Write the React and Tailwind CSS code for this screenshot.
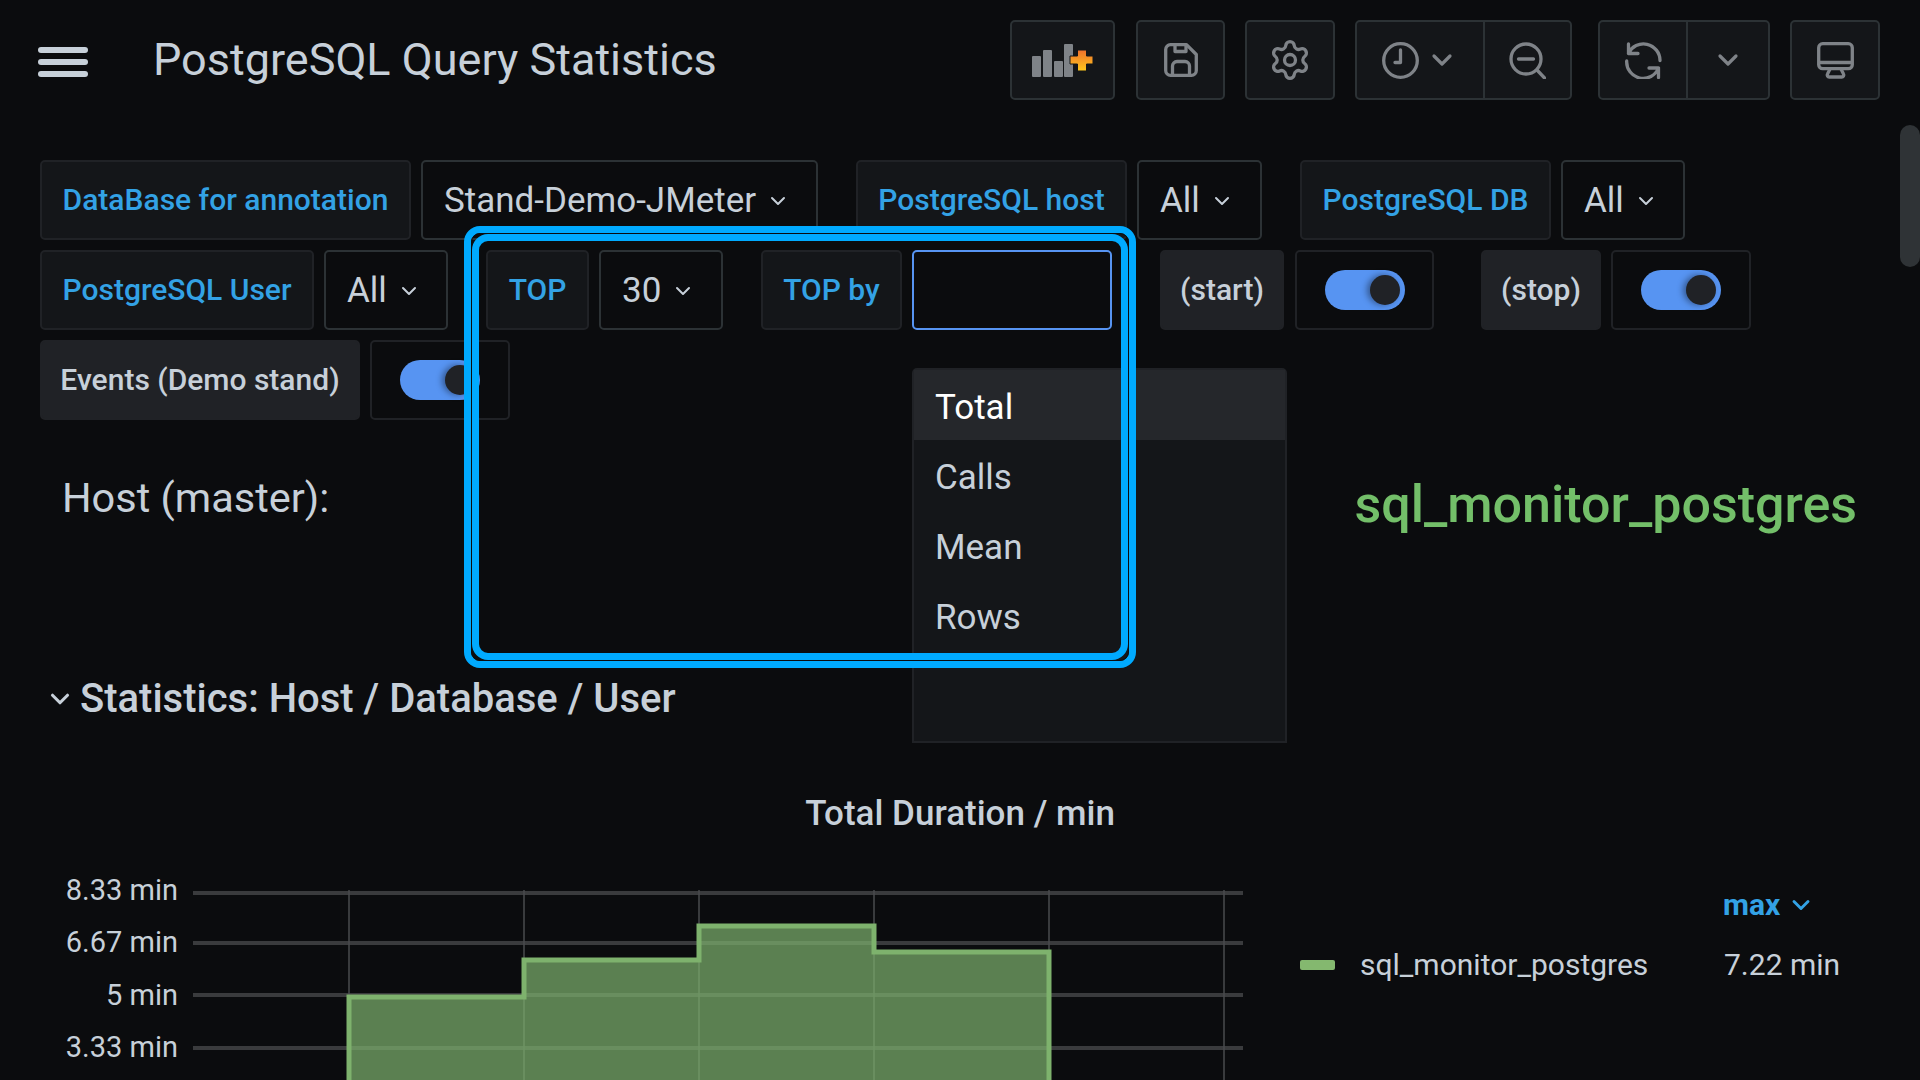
import React from 'react';
import { ChevronDown, Settings } from 'lucide-react';

const font = { fontFamily: 'Roboto, sans-serif' };

const Label = ({ w, dim, children }) => (
    <div className={`flex items-center justify-center h-[80px] pb-[1px] rounded-[5px] border-2 text-[30px] font-medium whitespace-nowrap ${w} ${dim ? 'bg-[#202226] border-[#202226] text-[#c7d0d9]' : 'bg-[#141619] border-[#202226] text-[#33a2e5]'}`}>
        {children}
    </div>
);

const Select = ({ w, ml, value }) => (
    <div className={`flex items-center h-[80px] pl-[21px] pt-[2px] rounded-[5px] border-2 border-[#2c3235] bg-[#0b0c0e] text-[35px] text-[#c7d0d9] whitespace-nowrap ${w} ${ml}`}>
        <span>{value}</span>
        <ChevronDown size={24} strokeWidth={2} className="ml-[10px] text-[#c7d0d9]" />
    </div>
);

const Toggle = ({ w, ml }) => (
    <div className={`flex items-center justify-center h-[80px] rounded-[5px] border-2 border-[#202226] bg-[#0b0c0e] ${w} ${ml}`}>
        <div className="relative w-[80px] h-[40px] rounded-full bg-[#5794f2]">
            <div className="absolute right-[5px] top-[5px] w-[30px] h-[30px] rounded-full bg-[#202226] shadow-[-3px_0_6px_rgba(0,0,0,0.4)]" />
        </div>
    </div>
);

const ToolBtn = ({ w, ml, children }) => (
    <div className={`flex items-center justify-center h-[80px] rounded-[5px] border-2 border-[#2c3235] bg-[#141619] ${w} ${ml}`}>
        {children}
    </div>
);

const ic = 'w-[37px] h-[37px] text-[#7f8388]';

const Header = () => (
    <div className="flex items-center h-[80px] mt-[20px]">
        <div className="ml-[38px] mt-[3px] w-[50px] flex flex-col gap-[6px]">
            <div className="h-[6px] rounded-full bg-[#c7d0d9]" />
            <div className="h-[6px] rounded-full bg-[#c7d0d9]" />
            <div className="h-[6px] rounded-full bg-[#c7d0d9]" />
        </div>
        <div className="ml-[65px] w-[857px] text-[45px] text-[#c7d0d9] whitespace-nowrap">PostgreSQL Query Statistics</div>
        <ToolBtn w="w-[105px]">
            <svg viewBox="0 0 61 33" className="w-[61px] h-[33px]">
                <defs>
                    <linearGradient id="plusGrad" x1="0" y1="0" x2="0" y2="1">
                        <stop offset="0" stopColor="#f0702c" />
                        <stop offset="1" stopColor="#fdc81c" />
                    </linearGradient>
                </defs>
                <g fill="#7f8388">
                    <rect x="0" y="12" width="9" height="21" rx="1" />
                    <rect x="11" y="6" width="9" height="27" rx="1" />
                    <rect x="22" y="17" width="9" height="16" rx="1" />
                    <rect x="32" y="0" width="9" height="33" rx="1" />
                </g>
                <path d="M38 12h7.500V6h9v6H61v8h-6.500v7h-9v-7H38z" fill="url(#plusGrad)" stroke="#141619" strokeWidth="1" />
            </svg>
        </ToolBtn>
        <ToolBtn w="w-[89px]" ml="ml-[21px]">
            <svg viewBox="0 0 34 34" className="w-[34px] h-[34px] text-[#7f8388]" fill="none" stroke="currentColor" strokeWidth="3.300" strokeLinejoin="round">
                <path d="M6.500 1.700H22.500L32.300 11.500V27.500a4.800 4.800 0 0 1-4.800 4.800H6.500a4.800 4.800 0 0 1-4.800-4.800V6.500a4.800 4.800 0 0 1 4.800-4.800z" />
                <path d="M11 2v6.500h11V2M8.500 32V23a4.500 4.500 0 0 1 4.500-4.500h8a4.500 4.500 0 0 1 4.500 4.500v9" />
            </svg>
        </ToolBtn>
        <ToolBtn w="w-[90px]" ml="ml-[20px]">
            <Settings size={44} strokeWidth={1.8} className="text-[#7f8388]" />
        </ToolBtn>
        <div className="flex h-[80px] w-[217px] ml-[20px] rounded-[5px] border-2 border-[#2c3235] bg-[#141619]">
            <div className="flex items-center justify-center w-[128px] border-r-2 border-[#2c3235] gap-[7px]">
                <svg viewBox="0 0 37 37" className={ic} fill="none" stroke="currentColor" strokeWidth="3.300" strokeLinecap="round" strokeLinejoin="round">
                    <circle cx="18.500" cy="18.500" r="16.800" />
                    <path d="M18.500 8v12.500H13" />
                </svg>
                <ChevronDown size={32} strokeWidth={2.4} className="text-[#7f8388]" />
            </div>
            <div className="flex items-center justify-center flex-1">
                <svg viewBox="0 0 37 37" className={ic} fill="none" stroke="currentColor" strokeWidth="3.300" strokeLinecap="round">
                    <circle cx="17" cy="17" r="15" />
                    <path d="M9.500 17h15M28 28l7.500 8" />
                </svg>
            </div>
        </div>
        <div className="flex h-[80px] w-[172px] ml-[26px] rounded-[5px] border-2 border-[#2c3235] bg-[#141619]">
            <div className="flex items-center justify-center w-[88px] border-r-2 border-[#2c3235]">
                <svg viewBox="0 0 37 37" className={ic} fill="none" stroke="currentColor" strokeWidth="3.300" strokeLinecap="round" strokeLinejoin="round">
                    <path d="M3.500 11.500A16.500 16.500 0 0 1 35 18.500M3.500 2V11.500H13" />
                    <path d="M1.700 19A16.500 16.500 0 0 0 33.500 26M24 26H33.500V35.500" />
                </svg>
            </div>
            <div className="flex items-center justify-center flex-1">
                <ChevronDown size={32} strokeWidth={2.4} className="text-[#7f8388]" />
            </div>
        </div>
        <ToolBtn w="w-[90px]" ml="ml-[20px]">
            <svg viewBox="0 0 37 37" className={ic} fill="none" stroke="currentColor" strokeWidth="3.300" strokeLinejoin="round">
                <rect x="1.700" y="1.700" width="33.600" height="25" rx="4" />
                <path d="M2 20.500h33M13 27l-2.500 5a2 2 0 0 0 1.800 3h12.400a2 2 0 0 0 1.800-3L24 27" />
            </svg>
        </ToolBtn>
    </div>
);

const Filters = () => (
    <div className="flex flex-col gap-[10px] mt-[60px] ml-[40px]">
        <div className="flex">
            <Label w="w-[371px]">DataBase for annotation</Label>
            <Select w="w-[397px]" ml="ml-[10px]" value="Stand-Demo-JMeter" />
            <Label w="w-[271px] ml-[38px]">PostgreSQL host</Label>
            <Select w="w-[125px]" ml="ml-[10px]" value="All" />
            <Label w="w-[251px] ml-[38px]">PostgreSQL DB</Label>
            <Select w="w-[124px]" ml="ml-[10px]" value="All" />
        </div>
        <div className="flex">
            <Label w="w-[274px]">PostgreSQL User</Label>
            <Select w="w-[124px]" ml="ml-[10px]" value="All" />
            <Label w="w-[103px] ml-[38px]">TOP</Label>
            <Select w="w-[124px]" ml="ml-[10px]" value="30" />
            <Label w="w-[141px] ml-[38px]">TOP by</Label>
            <div className="w-[200px] h-[80px] ml-[10px] rounded-[5px] border-2 border-[#5794f2] bg-[#0b0c0e]" />
            <Label dim w="w-[124px] ml-[48px]">(start)</Label>
            <Toggle w="w-[139px]" ml="ml-[11px]" />
            <Label dim w="w-[120px] ml-[47px]">(stop)</Label>
            <Toggle w="w-[140px]" ml="ml-[10px]" />
        </div>
        <div className="flex">
            <Label dim w="w-[320px]">Events (Demo stand)</Label>
            <Toggle w="w-[140px]" ml="ml-[10px]" />
        </div>
    </div>
);

const Chart = () => (
    <svg viewBox="0 0 1243 240" className="w-[1243px] h-[240px] mt-[1px]">
        <g stroke="#3a3b3d" strokeWidth="4">
            <path d="M193 53H1243M193 103H1243M193 155H1243M193 208H1243" />
        </g>
        <g stroke="#4a4b4e" strokeWidth="1.500">
            <path d="M349 50V240M524 50V240M699 50V240M874 50V240M1049 50V240M1224 50V240" />
        </g>
        <path d="M349 240V157H524V120H699V86H874V112H1049V240Z" fill="#7eb26d" fillOpacity="0.7" />
        <path d="M349 240V157H524V120H699V86H874V112H1049V240" fill="none" stroke="#7eb26d" strokeWidth="5" />
    </svg>
);

export default function App() {
    return (
        <div className="relative w-[1920px] h-[1080px] overflow-hidden bg-[#0b0c0e]" style={font}>
            <Header />
            <Filters />

            <div className="flex justify-between items-center h-[87px] mt-[35px] ml-[62px] mr-[63px]">
                <div className="text-[41.5px] text-[#c7d0d9]">Host (master):</div>
                <div className="text-[52px] leading-[75px] font-medium text-[#73bf69] mt-[12px]">sql_monitor_postgres</div>
            </div>

            <div className="flex items-center mt-[132px] ml-[45px] h-[50px]">
                <ChevronDown size={30} strokeWidth={2.5} className="text-[#c7d0d9]" />
                <div className="ml-[5px] text-[40px] font-medium text-[#c7d0d9]">Statistics: Host / Database / User</div>
            </div>

            <div className="mt-[65px] text-center text-[35px] font-medium text-[#c7d0d9] leading-[50px]">Total Duration / min</div>

            <div className="flex">
                <Chart />
            </div>

            {/* y axis and legend sit over the chart */}
            <div className="absolute left-[65px] top-[869px] w-[113px] text-right text-[29px] text-[#c7d0d9]">8.33 min</div>
            <div className="absolute left-[65px] top-[921px] w-[113px] text-right text-[29px] text-[#c7d0d9]">6.67 min</div>
            <div className="absolute left-[65px] top-[974px] w-[113px] text-right text-[29px] text-[#c7d0d9]">5 min</div>
            <div className="absolute left-[65px] top-[1026px] w-[113px] text-right text-[29px] text-[#c7d0d9]">3.33 min</div>

            <div className="absolute left-[1723px] top-[882px] flex items-center text-[30px] font-bold text-[#33a2e5]">
                max
                <ChevronDown size={28} strokeWidth={2.5} className="ml-[7px]" />
            </div>
            <div className="absolute left-[1300px] top-[942px] flex items-center text-[30px] text-[#c7d0d9] whitespace-nowrap">
                <div className="w-[35px] h-[10px] rounded-[2px] bg-[#84b86f]" />
                <span className="ml-[25px]">sql_monitor_postgres</span>
                <span className="absolute left-[424px]">7.22 min</span>
            </div>

            {/* open dropdown */}
            <div className="absolute left-[912px] top-[368px] w-[375px] h-[375px] rounded-t-[5px] border-2 border-[#202226] bg-[#141619] text-[35px] text-[#c7d0d9]">
                <div className="flex items-center h-[70px] pl-[21px] pt-[6px] bg-[#25272b] text-white">Total</div>
                <div className="flex items-center h-[70px] pl-[21px] pt-[6px]">Calls</div>
                <div className="flex items-center h-[70px] pl-[21px] pt-[6px]">Mean</div>
                <div className="flex items-center h-[70px] pl-[21px] pt-[6px]">Rows</div>
            </div>

            {/* annotation frame */}
            <div className="absolute left-[464px] top-[226px] w-[672px] h-[442px] rounded-[16px] border-[7px] border-[#00aaff]">
                <div className="w-full h-full rounded-[9px] border border-[#0b0c0e]">
                    <div className="w-full h-full rounded-[16px] border-[7px] border-[#00aaff]" />
                </div>
            </div>

            {/* scrollbar */}
            <div className="absolute right-0 top-[125px] w-[20px] h-[142px] rounded-full bg-[#2f3336]" />
        </div>
    );
}
